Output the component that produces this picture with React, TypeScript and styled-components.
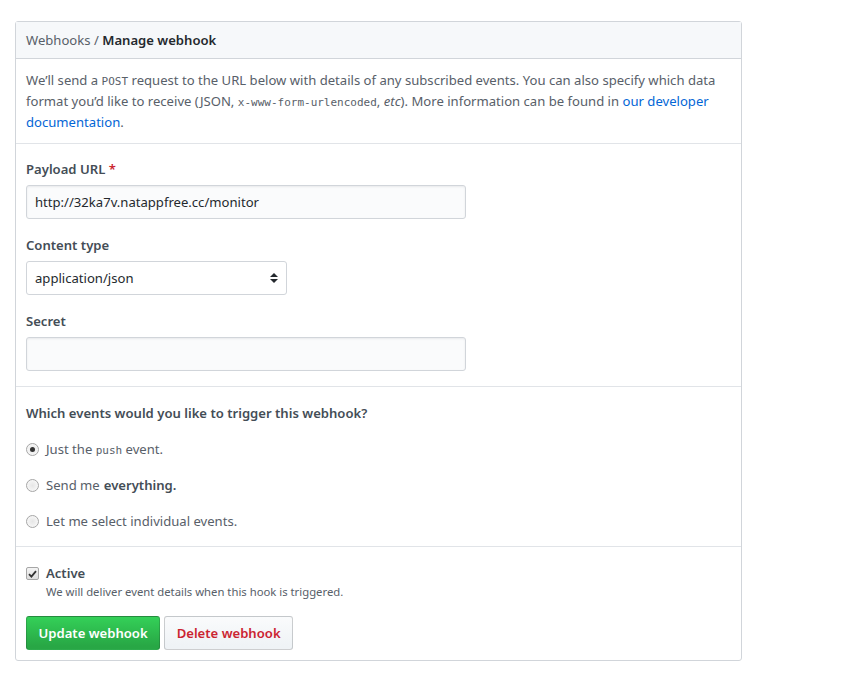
import React from 'react';
import styled, { createGlobalStyle } from 'styled-components';

const GlobalStyle = createGlobalStyle`
	body {
		margin: 0;
		padding: 21px 0 0 15px;
		background: #fff;
		font-family: 'Noto Sans', 'Open Sans', sans-serif;
		font-size: 13.1px;
		line-height: 21px;
		color: #24292e;
	}
`;

const Box = styled.div`
	width: 725px;
	border: 1px solid #d1d5da;
	border-radius: 3px;
`;

const Header = styled.div`
	background: #f6f8fa;
	border-bottom: 1px solid #d1d5da;
	padding: 8px 10px;
	height: 20px;
	line-height: 20px;
	color: #586069;
`;

const Strong = styled.strong`
	color: #24292e;
	font-weight: 600;
`;

const Section = styled.div<{ $top?: number; $bottom?: number }>`
	padding: ${(p) => p.$top ?? 10}px 10px ${(p) => p.$bottom ?? 10}px;
	border-bottom: 1px solid #e1e4e8;
	&:last-child {
		border-bottom: 0;
	}
`;

const Intro = styled.p`
	margin: 0;
	color: #586069;
	line-height: 21px;
`;

const Code = styled.code`
	font-family: 'DejaVu Sans Mono', 'Liberation Mono', monospace;
	font-size: 11px;
	line-height: 1;
`;

const Link = styled.a`
	color: #0366d6;
	text-decoration: none;
`;

const Field = styled.div`
	margin-bottom: 16px;
	&:last-child {
		margin-bottom: 0;
	}
`;

const Label = styled.label`
	display: block;
	font-weight: 600;
	color: #444d56;
	margin-bottom: 5px;
	line-height: 21px;
`;

const Required = styled.span`
	color: #cb2431;
`;

const Input = styled.input`
	display: block;
	box-sizing: border-box;
	width: 440px;
	height: 34px;
	padding: 6px 8px;
	border: 1px solid #d1d5da;
	border-radius: 3px;
	background: #fafbfc;
	box-shadow: inset 0 1px 2px rgba(27, 31, 35, 0.075);
	font: inherit;
	color: #24292e;
	outline: none;
`;

const SelectBox = styled.div`
	box-sizing: border-box;
	width: 261px;
	height: 34px;
	padding: 0 8px;
	display: flex;
	align-items: center;
	justify-content: space-between;
	border: 1px solid #d1d5da;
	border-radius: 3px;
	background: #fff;
	color: #24292e;
`;

const Question = styled.h4`
	margin: 0 0 7px;
	font-size: 13.1px;
	font-weight: 600;
	color: #444d56;
	line-height: 21px;
`;

const Option = styled.label`
	display: flex;
	align-items: center;
	gap: 7px;
	height: 36px;
	color: #586069;
`;

const Radio = styled.span<{ $checked?: boolean }>`
	box-sizing: border-box;
	width: 13px;
	height: 13px;
	border-radius: 50%;
	border: 1px solid #a6a6a6;
	background: radial-gradient(circle, #e6e6e6 0%, #fdfdfd 100%);
	display: flex;
	align-items: center;
	justify-content: center;
	&::after {
		content: '';
		display: ${(p) => (p.$checked ? 'block' : 'none')};
		width: 5px;
		height: 5px;
		border-radius: 50%;
		background: #333;
	}
`;

const OptionStrong = styled.b`
	font-weight: 600;
	color: #444d56;
	margin-left: 4px;
`;

const CheckRow = styled.div`
	display: flex;
	align-items: center;
	gap: 7px;
	font-weight: 600;
	color: #444d56;
	line-height: 21px;
`;

const Checkbox = styled.span`
	box-sizing: border-box;
	width: 13px;
	height: 13px;
	border: 1px solid #a6a6a6;
	border-radius: 2px;
	background: linear-gradient(#f4f4f4, #dedede);
	display: flex;
	align-items: center;
	justify-content: center;
`;

const Note = styled.p`
	margin: 0 0 16px 20px;
	font-size: 11.3px;
	color: #586069;
	line-height: 16px;
`;

const Buttons = styled.div`
	display: flex;
	gap: 4px;
`;

const Button = styled.button<{ $primary?: boolean }>`
	height: 34px;
	padding: 0 11.5px;
	border-radius: 3px;
	font: inherit;
	font-weight: 600;
	cursor: pointer;
	color: ${(p) => (p.$primary ? '#fff' : '#cb2431')};
	background: ${(p) =>
		p.$primary ? 'linear-gradient(-180deg, #34d058 0%, #28a745 90%)' : 'linear-gradient(-180deg, #fafbfc 0%, #eff3f6 90%)'};
	border: 1px solid rgba(27, 31, 35, 0.2);
`;

function App() {
	return (
		<>
			<GlobalStyle />
			<Box>
				<Header>
					Webhooks / <Strong>Manage webhook</Strong>
				</Header>
				<Section $top={11}>
					<Intro>
						We’ll send a <Code>POST</Code> request to the URL below with details of any subscribed events. You can also
						specify which data format you’d like to receive (JSON, <Code>x-www-form-urlencoded</Code>, <em>etc</em>). More
						information can be found in <Link href="#">our developer documentation</Link>.
					</Intro>
				</Section>
				<Section $top={15} $bottom={15}>
					<Field>
						<Label>
							Payload URL <Required>*</Required>
						</Label>
						<Input defaultValue="http://32ka7v.natappfree.cc/monitor" />
					</Field>
					<Field>
						<Label>Content type</Label>
						<SelectBox>
							application/json
							<svg width="8" height="12" viewBox="0 0 8 12">
								<path d="M4 1L8 5H0Z M4 11L0 7H8Z" fill="#24292e" />
							</svg>
						</SelectBox>
					</Field>
					<Field>
						<Label>Secret</Label>
						<Input />
					</Field>
				</Section>
				<Section $top={16} $bottom={7}>
					<Question>Which events would you like to trigger this webhook?</Question>
					<Option>
						<Radio $checked />
						<span>
							Just the <Code>push</Code> event.
						</span>
					</Option>
					<Option>
						<Radio />
						<span>
							Send me<OptionStrong>everything.</OptionStrong>
						</span>
					</Option>
					<Option>
						<Radio />
						<span>Let me select individual events.</span>
					</Option>
				</Section>
				<Section $top={16} $bottom={10}>
					<CheckRow>
						<Checkbox>
							<svg width="9" height="8" viewBox="0 0 9 8">
								<path d="M1 4.2L3.4 6.6L8 1.2" stroke="#333" strokeWidth="1.8" fill="none" />
							</svg>
						</Checkbox>
						Active
					</CheckRow>
					<Note>We will deliver event details when this hook is triggered.</Note>
					<Buttons>
						<Button $primary>Update webhook</Button>
						<Button>Delete webhook</Button>
					</Buttons>
				</Section>
			</Box>
		</>
	);
}

export default App;
